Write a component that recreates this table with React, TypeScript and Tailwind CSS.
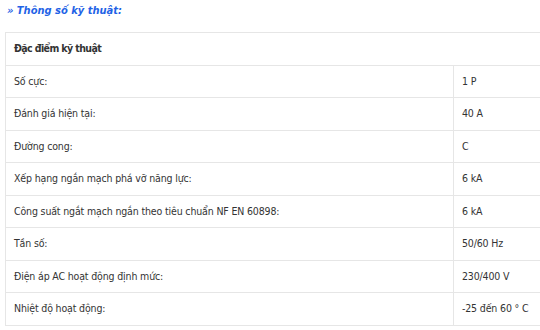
const rows: [string, string][] = [
  ['Số cực:', '1 P'],
  ['Đánh giá hiện tại:', '40 A'],
  ['Đường cong:', 'C'],
  ['Xếp hạng ngắn mạch phá vỡ năng lực:', '6 kA'],
  ['Công suất ngắt mạch ngắn theo tiêu chuẩn NF EN 60898:', '6 kA'],
  ['Tần số:', '50/60 Hz'],
  ['Điện áp AC hoạt động định mức:', '230/400 V'],
  ['Nhiệt độ hoạt động:', '-25 đến 60 ° C'],
]

export default function App() {
  return (
    <div className="w-[540px] h-[330px] overflow-hidden bg-white font-['DejaVu_Sans_Condensed','DejaVu_Sans',sans-serif] text-[#333]">
      <div className="pl-[7px] pt-[2px] h-[32px]">
        <h2 className="text-[11px] leading-[17px] font-bold italic text-[#1f63e6]">» Thông số kỹ thuật:</h2>
      </div>
      <table className="ml-[5px] w-[560px] border-collapse text-[10.5px] leading-[15.5px] tracking-[-0.15px]">
        <tbody>
          <tr>
            <th colSpan={2} className="border border-[#e6e6e6] px-[8px] py-[8px] text-left font-bold tracking-[-0.6px]">
              Đặc điểm kỹ thuật
            </th>
          </tr>
          {rows.map(([label, value]) => (
            <tr key={label}>
              <td className="w-[448px] border border-[#e6e6e6] px-[8px] py-[8px]">{label}</td>
              <td className="border border-[#e6e6e6] px-[8px] py-[8px]">{value}</td>
            </tr>
          ))}
        </tbody>
      </table>
    </div>
  )
}
